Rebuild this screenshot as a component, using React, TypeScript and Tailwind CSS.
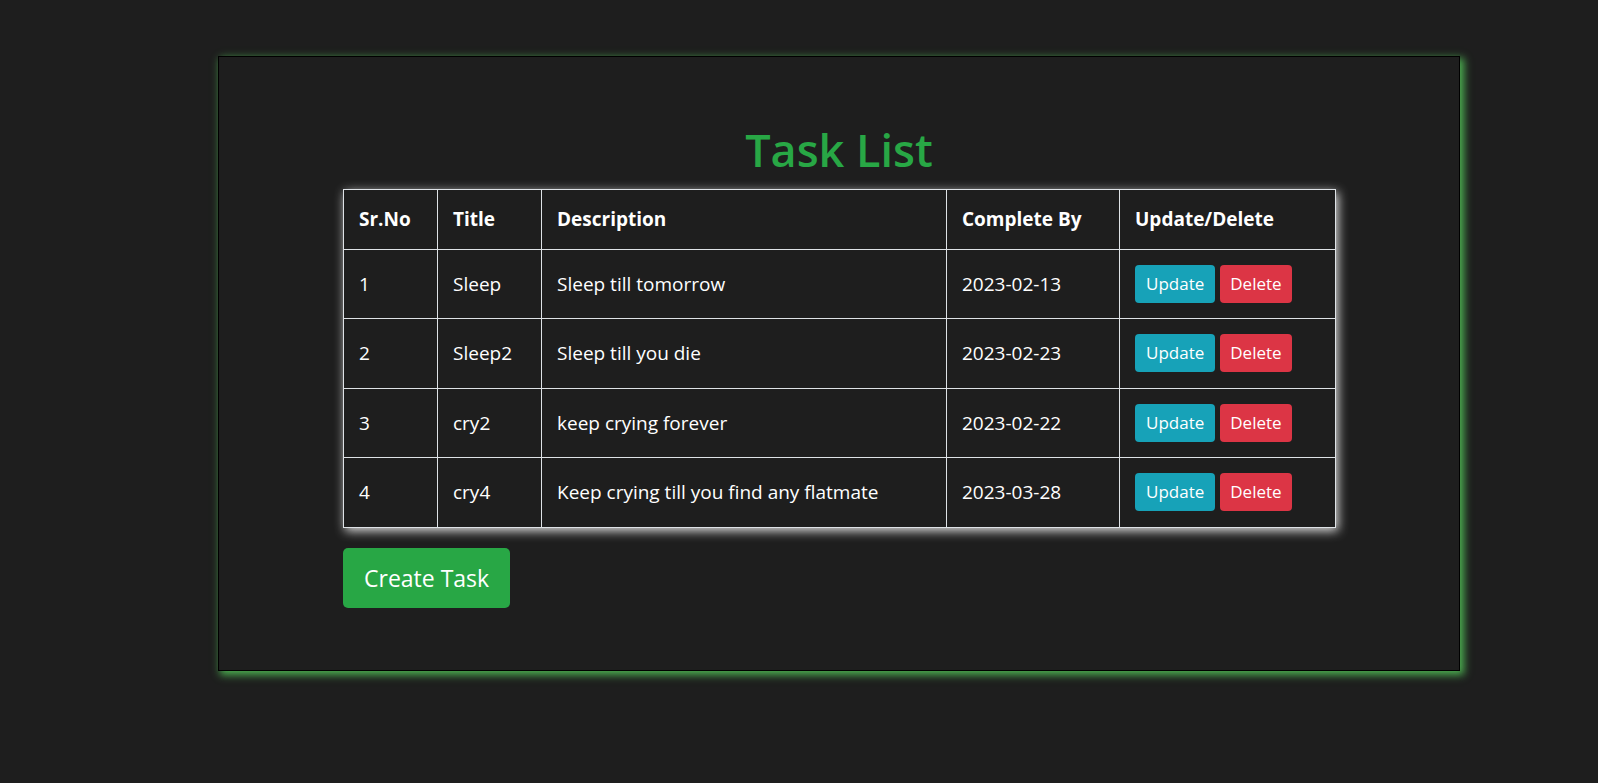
import React from "react";

const tasks = [
  { id: 1, title: "Sleep", desc: "Sleep till tomorrow", date: "2023-02-13" },
  { id: 2, title: "Sleep2", desc: "Sleep till you die", date: "2023-02-23" },
  { id: 3, title: "cry2", desc: "keep crying forever", date: "2023-02-22" },
  { id: 4, title: "cry4", desc: "Keep crying till you find any flatmate", date: "2023-03-28" },
];

export default function App() {
  return (
    <div
      className="min-h-screen w-full bg-[#1e1e1e] pt-[56px] pl-[218px]"
      style={{ fontFamily: '"Open Sans", "Noto Sans", sans-serif' }}
    >
      <div className="w-[1242px] h-[615px] border border-black bg-[#1e1e1e] shadow-[3px_3px_8px_1px_#4caf50]">
        <div className="w-[992px] mx-auto pt-[66px]">
          <h1 className="text-center text-[45px] leading-[1.2] font-semibold text-[#28a745] mb-[12px]">
            Task List
          </h1>
          <table className="w-[992px] table-fixed border-collapse text-white text-[19px] shadow-[2px_3px_10px_rgba(255,255,255,0.85)]">
            <colgroup>
              <col className="w-[94px]" />
              <col className="w-[104px]" />
              <col className="w-[405px]" />
              <col className="w-[173px]" />
              <col className="w-[216px]" />
            </colgroup>
            <thead>
              <tr className="h-[59.5px]">
                {["Sr.No", "Title", "Description", "Complete By", "Update/Delete"].map((h) => (
                  <th
                    key={h}
                    className="border border-[#dee2e6] px-[15px] text-left font-bold align-middle leading-6"
                  >
                    {h}
                  </th>
                ))}
              </tr>
            </thead>
            <tbody>
              {tasks.map((t) => (
                <tr key={t.id} className="h-[69.5px]">
                  <td className="border border-[#dee2e6] px-[15px] align-middle leading-6">{t.id}</td>
                  <td className="border border-[#dee2e6] px-[15px] align-middle leading-6">{t.title}</td>
                  <td className="border border-[#dee2e6] px-[15px] align-middle leading-6">{t.desc}</td>
                  <td className="border border-[#dee2e6] px-[15px] align-middle leading-6">{t.date}</td>
                  <td className="border border-[#dee2e6] px-[15px] align-middle">
                    <div className="flex gap-[5px]">
                      <button className="h-[38px] px-[11px] rounded-[4px] bg-[#17a2b8] text-white text-[17px] leading-6">
                        Update
                      </button>
                      <button className="h-[38px] px-[10px] rounded-[4px] bg-[#dc3545] text-white text-[17px] leading-6">
                        Delete
                      </button>
                    </div>
                  </td>
                </tr>
              ))}
            </tbody>
          </table>
          <button className="mt-[20px] h-[60px] px-[21px] rounded-[5px] bg-[#28a745] text-white text-[23px] leading-9">
            Create Task
          </button>
        </div>
      </div>
    </div>
  );
}
